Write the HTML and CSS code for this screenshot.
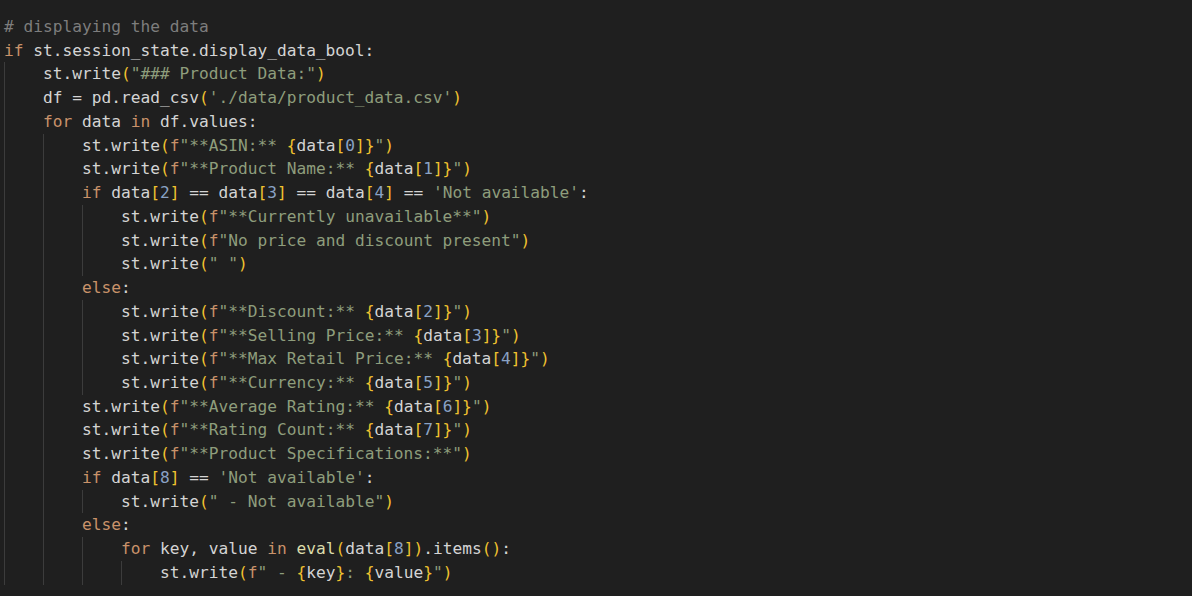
FILE: index.html
```html
<!DOCTYPE html>
<html>
<head>
<meta charset="utf-8">
<link rel="stylesheet" href="styles.css">
</head>
<body>
<div class="editor">
<div class="ln"><span class="c"># displaying the data</span></div>
<div class="ln"><span class="k">if</span> st.session_state.display_data_bool:</div>
<div class="ln"><span class="ig"></span>st.write<span class="p">(</span><span class="s">"### Product Data:"</span><span class="p">)</span></div>
<div class="ln"><span class="ig"></span>df = pd.read_csv<span class="p">(</span><span class="s">'./data/product_data.csv'</span><span class="p">)</span></div>
<div class="ln"><span class="ig"></span><span class="k">for</span> data <span class="k">in</span> df.values:</div>
<div class="ln"><span class="ig"></span><span class="ig"></span>st.write<span class="p">(</span><span class="k">f</span><span class="s">"**ASIN:** </span><span class="p">{</span>data<span class="p">[</span><span class="n">0</span><span class="p">]}</span><span class="s">"</span><span class="p">)</span></div>
<div class="ln"><span class="ig"></span><span class="ig"></span>st.write<span class="p">(</span><span class="k">f</span><span class="s">"**Product Name:** </span><span class="p">{</span>data<span class="p">[</span><span class="n">1</span><span class="p">]}</span><span class="s">"</span><span class="p">)</span></div>
<div class="ln"><span class="ig"></span><span class="ig"></span><span class="k">if</span> data<span class="p">[</span><span class="n">2</span><span class="p">]</span> == data<span class="p">[</span><span class="n">3</span><span class="p">]</span> == data<span class="p">[</span><span class="n">4</span><span class="p">]</span> == <span class="s">'Not available'</span>:</div>
<div class="ln"><span class="ig"></span><span class="ig"></span><span class="ig"></span>st.write<span class="p">(</span><span class="k">f</span><span class="s">"**Currently unavailable**"</span><span class="p">)</span></div>
<div class="ln"><span class="ig"></span><span class="ig"></span><span class="ig"></span>st.write<span class="p">(</span><span class="k">f</span><span class="s">"No price and discount present"</span><span class="p">)</span></div>
<div class="ln"><span class="ig"></span><span class="ig"></span><span class="ig"></span>st.write<span class="p">(</span><span class="s">" "</span><span class="p">)</span></div>
<div class="ln"><span class="ig"></span><span class="ig"></span><span class="k">else</span>:</div>
<div class="ln"><span class="ig"></span><span class="ig"></span><span class="ig"></span>st.write<span class="p">(</span><span class="k">f</span><span class="s">"**Discount:** </span><span class="p">{</span>data<span class="p">[</span><span class="n">2</span><span class="p">]}</span><span class="s">"</span><span class="p">)</span></div>
<div class="ln"><span class="ig"></span><span class="ig"></span><span class="ig"></span>st.write<span class="p">(</span><span class="k">f</span><span class="s">"**Selling Price:** </span><span class="p">{</span>data<span class="p">[</span><span class="n">3</span><span class="p">]}</span><span class="s">"</span><span class="p">)</span></div>
<div class="ln"><span class="ig"></span><span class="ig"></span><span class="ig"></span>st.write<span class="p">(</span><span class="k">f</span><span class="s">"**Max Retail Price:** </span><span class="p">{</span>data<span class="p">[</span><span class="n">4</span><span class="p">]}</span><span class="s">"</span><span class="p">)</span></div>
<div class="ln"><span class="ig"></span><span class="ig"></span><span class="ig"></span>st.write<span class="p">(</span><span class="k">f</span><span class="s">"**Currency:** </span><span class="p">{</span>data<span class="p">[</span><span class="n">5</span><span class="p">]}</span><span class="s">"</span><span class="p">)</span></div>
<div class="ln"><span class="ig"></span><span class="ig"></span>st.write<span class="p">(</span><span class="k">f</span><span class="s">"**Average Rating:** </span><span class="p">{</span>data<span class="p">[</span><span class="n">6</span><span class="p">]}</span><span class="s">"</span><span class="p">)</span></div>
<div class="ln"><span class="ig"></span><span class="ig"></span>st.write<span class="p">(</span><span class="k">f</span><span class="s">"**Rating Count:** </span><span class="p">{</span>data<span class="p">[</span><span class="n">7</span><span class="p">]}</span><span class="s">"</span><span class="p">)</span></div>
<div class="ln"><span class="ig"></span><span class="ig"></span>st.write<span class="p">(</span><span class="k">f</span><span class="s">"**Product Specifications:**"</span><span class="p">)</span></div>
<div class="ln"><span class="ig"></span><span class="ig"></span><span class="k">if</span> data<span class="p">[</span><span class="n">8</span><span class="p">]</span> == <span class="s">'Not available'</span>:</div>
<div class="ln"><span class="ig"></span><span class="ig"></span><span class="ig"></span>st.write<span class="p">(</span><span class="s">" - Not available"</span><span class="p">)</span></div>
<div class="ln"><span class="ig"></span><span class="ig"></span><span class="k">else</span>:</div>
<div class="ln"><span class="ig"></span><span class="ig"></span><span class="ig"></span><span class="k">for</span> key, value <span class="k">in</span> <span class="f">eval</span><span class="p">(</span>data<span class="p">[</span><span class="n">8</span><span class="p">]</span><span class="p">)</span>.items<span class="p">()</span>:</div>
<div class="ln"><span class="ig"></span><span class="ig"></span><span class="ig"></span><span class="ig"></span>st.write<span class="p">(</span><span class="k">f</span><span class="s">" - </span><span class="p">{</span>key<span class="p">}</span><span class="s">: </span><span class="p">{</span>value<span class="p">}</span><span class="s">"</span><span class="p">)</span></div>
</div>
</body>
</html>
```
FILE: styles.css
```css
html, body {
  margin: 0;
  padding: 0;
  background: #1f1f1f;
  width: 1192px;
  height: 596px;
  overflow: hidden;
}
.editor {
  padding: 15px 0 0 4px;
  font-family: "DejaVu Sans Mono", "Liberation Mono", monospace;
  font-size: 16.2px;
  color: #d4d4d4;
}
.ln {
  height: 23.74px;
  line-height: 23.74px;
  white-space: pre;
}
.ig {
  display: inline-block;
  width: 39px;
  height: 23.74px;
  vertical-align: top;
  box-shadow: inset 1px 0 0 #3c3c3c;
}
.k { color: #c9926a; }
.s { color: #8e9d7c; }
.c { color: #7d7d7d; }
.p { color: #f0c22f; }
.n { color: #8aa2c4; }
.f { color: #dcdcaa; }
```
